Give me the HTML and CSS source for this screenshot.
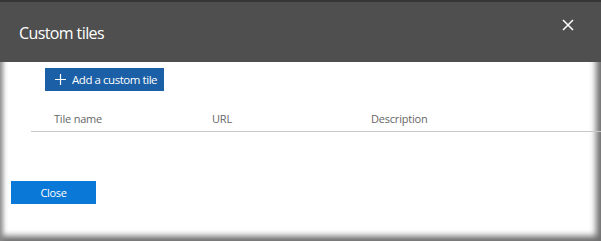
FILE: index.html
```html
<!DOCTYPE html>
<html lang="en">

<head>
    <meta charset="utf-8" />
    <meta name="viewport" content="width=device-width, initial-scale=1.0" />
    <title>Custom tiles</title>
    <link rel="stylesheet" href="styles.css">
</head>

<body>
    <div class="dialog">
        <div class="dialog-header">
            <h1 class="dialog-title">Custom tiles</h1>
            <button class="icon-close" aria-label="Close">
                <svg width="12" height="12" viewBox="0 0 12 12">
                    <path d="M1 1 L11 11 M11 1 L1 11" stroke="#fff" stroke-width="1.5" fill="none" />
                </svg>
            </button>
        </div>

        <div class="dialog-body">
            <button class="btn-add">
                <svg width="11" height="11" viewBox="0 0 11 11">
                    <path d="M5.5 0 V11 M0 5.5 H11" stroke="#fff" stroke-width="1.2" fill="none" />
                </svg>
                Add a custom tile
            </button>

            <div class="tile-table">
                <div class="tile-head">
                    <div class="col col-name">Tile name</div>
                    <div class="col col-url">URL</div>
                    <div class="col col-desc">Description</div>
                </div>
            </div>
        </div>

        <div class="dialog-footer">
            <button class="btn-close">Close</button>
        </div>
    </div>
</body>

</html>
```

FILE: styles.css
```css
html {
    font-family: "Open Sans", "Noto Sans", sans-serif;
    color: #333;
}

body {
    margin: 0;
    width: 601px;
    height: 241px;
    overflow: hidden;
    background: #fff;
}

.dialog {
    height: 241px;
    box-sizing: border-box;
    box-shadow: inset 6px 0 5px -3px #8a8a8a,
        inset -9px 0 6px -4px #6f6f6f,
        inset 0 -9px 6px -4px #6f6f6f;
}

.dialog-header {
    height: 60px;
    background: #4f4f4f;
    border-top: 2px solid #363636;
    display: flex;
    align-items: center;
    justify-content: space-between;
    padding: 0 27px 0 19px;
}

.dialog-title {
    margin: 0;
    font-size: 16px;
    font-weight: normal;
    color: #fff;
    letter-spacing: -0.6px;
    padding-top: 2px;
}

.icon-close {
    border: 0;
    background: none;
    padding: 0;
    margin-top: -14px;
    display: flex;
}

.dialog-body {
    padding-top: 6px;
}

.btn-add {
    margin-left: 45px;
    width: 119px;
    height: 23px;
    border: 0;
    background: #1b5fa6;
    color: #fff;
    font-family: inherit;
    font-size: 11.5px;
    letter-spacing: -0.45px;
    white-space: nowrap;
    display: flex;
    align-items: center;
    gap: 6px;
    padding: 0 0 0 10px;
}

.tile-table {
    margin: 15px 0 0 31px;
}

.tile-head {
    display: flex;
    border-bottom: 1px solid #c8c8c8;
    height: 25px;
    align-items: center;
}

.col {
    font-size: 11px;
    letter-spacing: -0.2px;
    color: #666;
    padding-left: 23px;
}

.col-name {
    width: 135px;
}

.col-url {
    width: 136px;
}

.dialog-footer {
    padding: 48px 0 0 11px;
}

.btn-close {
    width: 85px;
    height: 23px;
    border: 0;
    background: #0a78d7;
    color: #fff;
    font-family: inherit;
    font-size: 11px;
    letter-spacing: -0.3px;
    padding: 0;
}
```
